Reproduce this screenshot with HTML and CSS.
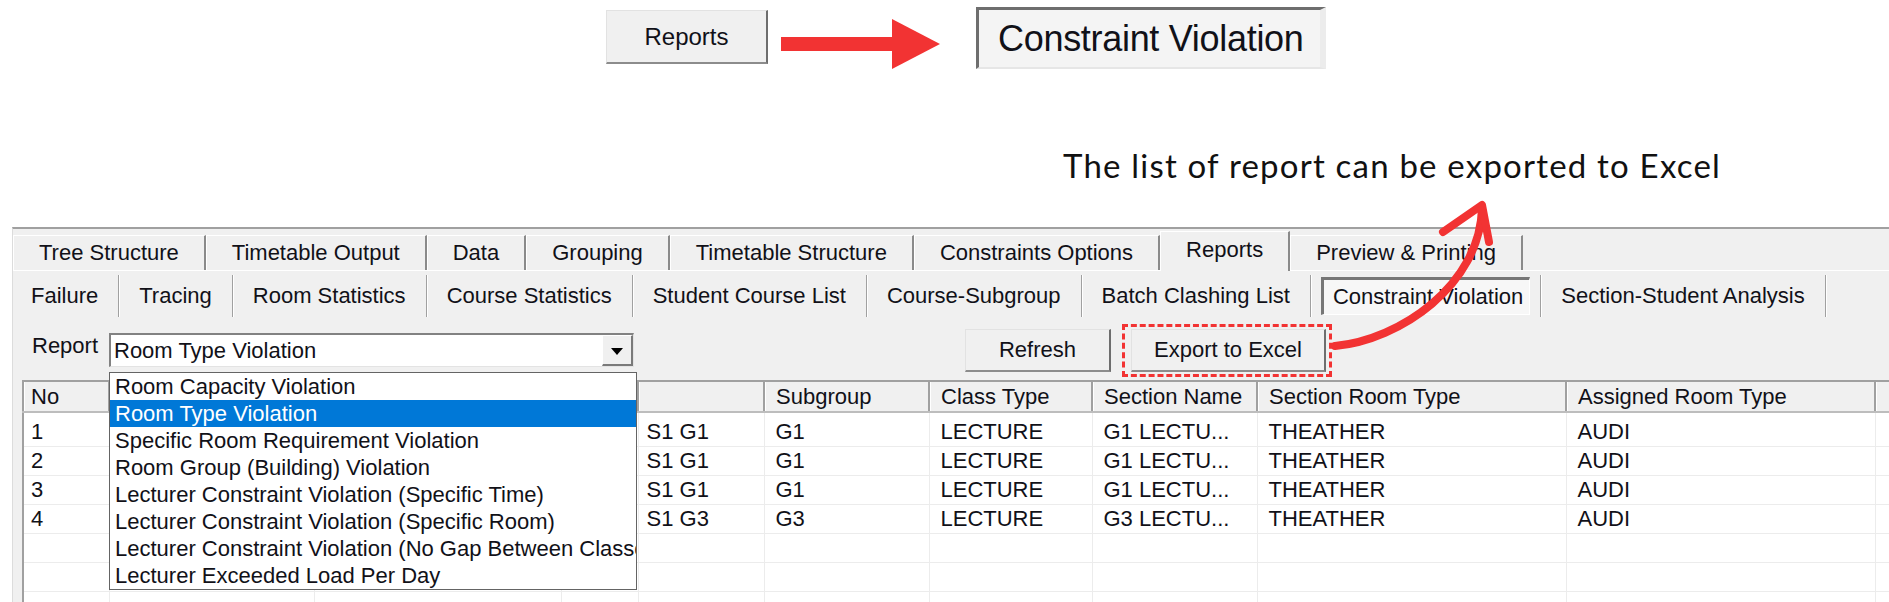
FILE: index.html
```html
<!DOCTYPE html>
<html lang="en">
<head>
  <meta charset="UTF-8" />
  <meta name="viewport" content="width=device-width, initial-scale=1.0" />
  <title>Reports - Constraint Violation</title>
  <link rel="stylesheet" href="styles.css">
</head>
<body>
  <!-- breadcrumb: Reports -> Constraint Violation -->
  <div class="intro">
    <div class="legacy-btn">Reports</div>
    <svg class="intro-arrow" width="160" height="50" viewBox="0 0 160 50">
      <rect x="0" y="18" width="114" height="14" fill="#f23333" />
      <polygon points="111,0 159,25 111,50" fill="#f23333" />
    </svg>
    <div class="sunken-box">Constraint Violation</div>
  </div>

  <p class="caption">The list of report can be exported to Excel</p>

  <div class="window">
    <div class="tabs">
      <div class="tab">Tree Structure</div>
      <div class="tab">Timetable Output</div>
      <div class="tab">Data</div>
      <div class="tab">Grouping</div>
      <div class="tab">Timetable Structure</div>
      <div class="tab">Constraints Options</div>
      <div class="tab active">Reports</div>
      <div class="tab">Preview &amp; Printing</div>
    </div>

    <div class="panel">
      <div class="subtabs">
        <div class="subtab">Failure</div>
        <div class="subtab">Tracing</div>
        <div class="subtab">Room Statistics</div>
        <div class="subtab">Course Statistics</div>
        <div class="subtab">Student Course List</div>
        <div class="subtab">Course-Subgroup</div>
        <div class="subtab">Batch Clashing List</div>
        <div class="subtab active"><span>Constraint Violation</span></div>
        <div class="subtab">Section-Student Analysis</div>
      </div>

      <div class="toolbar">
        <label class="toolbar-label">Report</label>
        <div class="combo">
          <div class="combo-value">Room Type Violation</div>
          <div class="combo-btn"><span class="caret"></span></div>
          <ul class="combo-list">
            <li>Room Capacity Violation</li>
            <li class="selected">Room Type Violation</li>
            <li>Specific Room Requirement Violation</li>
            <li>Room Group (Building) Violation</li>
            <li>Lecturer Constraint Violation (Specific Time)</li>
            <li>Lecturer Constraint Violation (Specific Room)</li>
            <li>Lecturer Constraint Violation (No Gap Between Classes)</li>
            <li>Lecturer Exceeded Load Per Day</li>
          </ul>
        </div>
        <div class="actions">
          <button class="legacy-btn small">Refresh</button>
          <div class="highlight">
            <button class="legacy-btn small wide">Export to Excel</button>
          </div>
        </div>
      </div>

      <table class="grid">
        <colgroup>
          <col class="w-no">
          <col class="w-course">
          <col class="w-section">
          <col class="w-code">
          <col class="w-group">
          <col class="w-sub">
          <col class="w-type">
          <col class="w-name">
          <col class="w-wide">
          <col class="w-wide">
          <col class="w-rest">
        </colgroup>
        <thead>
          <tr>
            <th>No</th>
            <th></th>
            <th></th>
            <th></th>
            <th></th>
            <th>Subgroup</th>
            <th>Class Type</th>
            <th>Section Name</th>
            <th>Section Room Type</th>
            <th>Assigned Room Type</th>
            <th></th>
          </tr>
        </thead>
        <tbody>
          <tr>
            <td>1</td><td></td><td></td><td></td><td>S1 G1</td><td>G1</td>
            <td>LECTURE</td><td>G1 LECTU...</td><td>THEATHER</td><td>AUDI</td><td></td>
          </tr>
          <tr>
            <td>2</td><td></td><td></td><td></td><td>S1 G1</td><td>G1</td>
            <td>LECTURE</td><td>G1 LECTU...</td><td>THEATHER</td><td>AUDI</td><td></td>
          </tr>
          <tr>
            <td>3</td><td></td><td></td><td></td><td>S1 G1</td><td>G1</td>
            <td>LECTURE</td><td>G1 LECTU...</td><td>THEATHER</td><td>AUDI</td><td></td>
          </tr>
          <tr>
            <td>4</td><td></td><td></td><td></td><td>S1 G3</td><td>G3</td>
            <td>LECTURE</td><td>G3 LECTU...</td><td>THEATHER</td><td>AUDI</td><td></td>
          </tr>
          <tr><td></td><td></td><td></td><td></td><td></td><td></td><td></td><td></td><td></td><td></td><td></td></tr>
          <tr><td></td><td></td><td></td><td></td><td></td><td></td><td></td><td></td><td></td><td></td><td></td></tr>
          <tr><td></td><td></td><td></td><td></td><td></td><td></td><td></td><td></td><td></td><td></td><td></td></tr>
        </tbody>
      </table>
    </div>
  </div>

  <!-- hand drawn pointer from the export button up to the caption -->
  <svg class="scribble" width="190" height="180" viewBox="0 0 190 180">
    <path d="M15 156 C80 150 160 95 162 18" fill="none" stroke="#f23333" stroke-width="8" stroke-linecap="round" />
    <path d="M123 42 L162 15 L169 52" fill="none" stroke="#f23333" stroke-width="8" stroke-linecap="round" stroke-linejoin="round" />
  </svg>
</body>
</html>
```

FILE: styles.css
```css
:root {
  --ui-bg: #f0f0f0;
  --ui-dark: #a0a0a0;
  --ui-shadow: #6e6e6e;
  --ui-light: #ffffff;
  --ui-text: #111118;
  --select: #0078d7;
  --red: #f23333;
}

* {
  margin: 0;
  padding: 0;
  box-sizing: border-box;
}

body {
  position: relative;
  width: 1889px;
  height: 602px;
  overflow: hidden;
  background: #fff;
  font-family: "Liberation Sans", Arial, sans-serif;
  font-size: 22px;
  color: var(--ui-text);
}

/* top breadcrumb */
.intro {
  display: flex;
  align-items: flex-start;
  height: 70px;
  padding: 7px 0 0 606px;
}

.legacy-btn {
  display: flex;
  align-items: center;
  justify-content: center;
  background: var(--ui-bg);
  border: 1px solid #e2e2e2;
  border-right: 2px solid var(--ui-shadow);
  border-bottom: 2px solid #8c8c8c;
  font-family: inherit;
  color: var(--ui-text);
}

.intro .legacy-btn {
  width: 162px;
  height: 54px;
  margin-top: 3px;
  font-size: 24px;
}

.intro-arrow {
  margin: 12px 0 0 13px;
}

.sunken-box {
  display: flex;
  align-items: center;
  width: 350px;
  height: 62px;
  margin-left: 35px;
  padding-left: 19px;
  background: #f4f4f4;
  border-top: 3px solid #6e6e6e;
  border-left: 3px solid #6e6e6e;
  border-right: 6px solid #ececec;
  border-bottom: 2px solid #e6e6e6;
  font-size: 36px;
  letter-spacing: -0.3px;
}

.caption {
  margin: 75px 0 0 1063px;
  font-family: Lato, "Noto Sans", sans-serif;
  font-size: 33px;
  letter-spacing: 1.2px;
  line-height: 40px;
  color: #111;
}

/* application window */
.window {
  margin: 42px 0 0 12px;
  height: 400px;
  background: var(--ui-bg);
  border-top: 2px solid var(--ui-dark);
  border-left: 1px solid #dcdcdc;
  overflow: hidden;
}

.tabs {
  display: flex;
  align-items: flex-end;
  height: 41px;
}

.tab {
  display: flex;
  align-items: center;
  height: 35px;
  padding: 0 25px;
  border-top: 1px solid var(--ui-light);
  border-left: 1px solid var(--ui-light);
  border-right: 2px solid #8a8a8a;
  white-space: nowrap;
}

.tab.active {
  position: relative;
  height: 40px;
  margin-bottom: -1px;
  padding-bottom: 4px;
  background: var(--ui-bg);
  z-index: 1;
}

.panel {
  border-top: 1px solid var(--ui-light);
}

.subtabs {
  display: flex;
  align-items: center;
  height: 49px;
}

.subtab {
  display: flex;
  align-items: center;
  height: 42px;
  padding: 0 20px;
  border-right: 1px solid var(--ui-dark);
  box-shadow: 1px 0 0 var(--ui-light);
  white-space: nowrap;
}

.subtab:first-child {
  padding-left: 18px;
}

.subtab.active {
  padding: 0 10px;
}

.subtab.active span {
  display: flex;
  align-items: center;
  height: 38px;
  padding: 0 6px 0 9px;
  background: #f7f7f7;
  border-top: 3px solid #777;
  border-left: 3px solid #777;
  border-right: 1px solid #fff;
  border-bottom: 1px solid #fff;
}

/* report picker row */
.toolbar {
  display: flex;
  align-items: center;
  height: 60px;
  padding-left: 19px;
}

.toolbar-label {
  width: 77px;
  margin-bottom: 8px;
}

.combo {
  position: relative;
  display: flex;
  width: 525px;
  height: 34px;
  background: #fff;
  border-top: 2px solid #828282;
  border-left: 2px solid #828282;
  border-right: 1px solid #e3e3e3;
  border-bottom: 1px solid #e3e3e3;
}

.combo-value {
  flex: 1;
  padding: 3px 0 0 3px;
}

.combo-btn {
  display: flex;
  align-items: center;
  justify-content: center;
  width: 31px;
  background: var(--ui-bg);
  border-top: 1px solid var(--ui-light);
  border-left: 1px solid var(--ui-light);
  border-right: 2px solid #7a7a7a;
  border-bottom: 2px solid #7a7a7a;
}

.caret {
  width: 0;
  height: 0;
  border-left: 6px solid transparent;
  border-right: 6px solid transparent;
  border-top: 7px solid #000;
  margin-top: 2px;
}

.combo-list {
  position: absolute;
  top: 37px;
  left: -2px;
  width: 528px;
  list-style: none;
  background: #fff;
  border: 1px solid #646464;
  overflow: hidden;
  z-index: 5;
}

.combo-list li {
  height: 27px;
  line-height: 27px;
  padding-left: 5px;
  white-space: nowrap;
}

.combo-list li.selected {
  background: var(--select);
  color: #fff;
}

.actions {
  display: flex;
  align-items: center;
  margin-left: 331px;
}

.legacy-btn.small {
  width: 146px;
  height: 43px;
  font-size: 22px;
}

.legacy-btn.wide {
  width: 195px;
}

.highlight {
  margin-left: 11px;
  padding: 2px 3px 2px 6px;
  border: 3px dashed var(--red);
}

/* result list */
.grid {
  margin-left: 9px;
  width: 1900px;
  table-layout: fixed;
  border-collapse: collapse;
  background: #fff;
  border-top: 2px solid var(--ui-dark);
  border-left: 2px solid var(--ui-dark);
}

.w-no { width: 86px; }
.w-course { width: 205px; }
.w-section { width: 247px; }
.w-code { width: 77px; }
.w-group { width: 126px; }
.w-sub { width: 165px; }
.w-type { width: 163px; }
.w-name { width: 165px; }
.w-wide { width: 309px; }
.w-rest { width: 60px; }

.grid th {
  height: 31px;
  padding: 0 11px;
  text-align: left;
  font-weight: normal;
  background: var(--ui-bg);
  border-right: 2px solid var(--ui-dark);
  border-bottom: 2px solid #bdbdbd;
  box-shadow: inset 1px 0 0 var(--ui-light);
  white-space: nowrap;
  overflow: hidden;
}

.grid td {
  height: 29px;
  padding: 0 11px;
  line-height: 28px;
  border-right: 1px solid #ececec;
  border-bottom: 1px solid #ececec;
  white-space: nowrap;
  overflow: hidden;
}

.grid th:first-child,
.grid td:first-child {
  padding-left: 7px;
}

.grid td:nth-child(5) {
  padding-left: 8px;
}

.grid tbody tr:first-child td {
  height: 34px;
  padding-top: 5px;
}

/* annotation */
.scribble {
  position: absolute;
  left: 1320px;
  top: 190px;
  pointer-events: none;
  z-index: 10;
}
```
